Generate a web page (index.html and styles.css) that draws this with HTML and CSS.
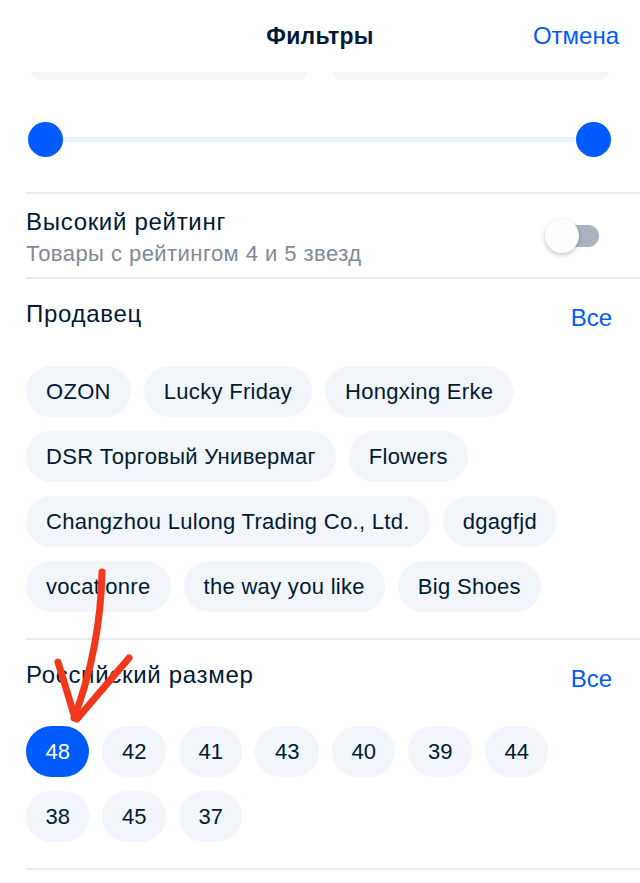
FILE: index.html
```html
<!DOCTYPE html>
<html lang="ru">
<head>
    <meta charset="UTF-8">
    <meta name="viewport" content="width=device-width, initial-scale=1.0">
    <title>Фильтры</title>
    <link rel="stylesheet" href="styles.css">
</head>
<body>
    <div class="screen">
        <div class="header">
            <div></div>
            <div class="header-title">Фильтры</div>
            <a class="header-cancel" href="#">Отмена</a>
        </div>

        <!-- price inputs, scrolled under the header -->
        <div class="price-inputs">
            <div class="price-input"></div>
            <div class="price-input"></div>
        </div>

        <div class="section slider-section">
            <div class="range">
                <div class="range-thumb"></div>
                <div class="range-track"></div>
                <div class="range-thumb"></div>
            </div>
        </div>

        <div class="section rating-section">
            <div class="rating-text">
                <div class="section-title">Высокий рейтинг</div>
                <div class="section-sub">Товары с рейтингом 4 и 5 звезд</div>
            </div>
            <div class="toggle">
                <div class="toggle-knob"></div>
            </div>
        </div>

        <div class="section">
            <div class="section-head">
                <div class="section-title">Продавец</div>
                <a class="section-all" href="#">Все</a>
            </div>
            <div class="chips">
                <span class="chip">OZON</span>
                <span class="chip">Lucky Friday</span>
                <span class="chip">Hongxing Erke</span>
                <span class="chip">DSR Торговый Универмаг</span>
                <span class="chip">Flowers</span>
                <span class="chip">Changzhou Lulong Trading Co., Ltd.</span>
                <span class="chip">dgagfjd</span>
                <span class="chip">vocationre</span>
                <span class="chip">the way you like</span>
                <span class="chip">Big Shoes</span>
            </div>
        </div>

        <div class="section">
            <div class="section-head">
                <div class="section-title">Российский размер</div>
                <a class="section-all" href="#">Все</a>
            </div>
            <div class="chips sizes">
                <span class="chip chip-active">48</span>
                <span class="chip">42</span>
                <span class="chip">41</span>
                <span class="chip">43</span>
                <span class="chip">40</span>
                <span class="chip">39</span>
                <span class="chip">44</span>
                <span class="chip">38</span>
                <span class="chip">45</span>
                <span class="chip">37</span>
            </div>
        </div>

        <!-- hand drawn annotation -->
        <svg class="annotation" width="640" height="883" viewBox="0 0 640 883">
            <path d="M102 572 C 101 620, 93 668, 74 718" />
            <path d="M58 662 L 75 718" />
            <path d="M129 658 L 77 719" />
        </svg>
    </div>
</body>
</html>
```

FILE: styles.css
```css
* {
    margin: 0;
    padding: 0;
    box-sizing: border-box;
}

body {
    font-family: 'Liberation Sans', Arial, sans-serif;
    color: #001a34;
    background: white;
}

a {
    text-decoration: none;
}

.screen {
    position: relative;
    width: 640px;
    height: 883px;
    overflow: hidden;
}

.header {
    height: 72px;
    display: grid;
    grid-template-columns: 1fr auto 1fr;
    align-items: center;
    padding: 0 21px;
}

.header-title {
    font-size: 23px;
    font-weight: bold;
    letter-spacing: 0.3px;
}

.header-cancel {
    justify-self: end;
    font-size: 24px;
    color: #005bff;
}

.price-inputs {
    height: 8px;
    overflow: hidden;
    display: flex;
    align-items: flex-end;
    gap: 22px;
    padding: 0 30px;
}

.price-input {
    flex: 1;
    height: 50px;
    flex-shrink: 0;
    background: #f4f6fa;
    border-radius: 12px;
}

.section {
    margin-left: 26px;
    padding-right: 28px;
    border-bottom: 2px solid #e8ebf0;
}

.slider-section {
    padding: 42px 29px 35px 2px;
}

.range {
    display: flex;
    align-items: center;
}

.range-thumb {
    width: 35px;
    height: 35px;
    border-radius: 50%;
    background: #005bff;
    flex-shrink: 0;
}

.range-track {
    flex: 1;
    height: 5px;
    background: #e9f1fc;
}

.rating-section {
    display: flex;
    align-items: center;
    padding-top: 13px;
    padding-bottom: 10px;
}

.rating-text {
    flex: 1;
}

.section-title {
    font-size: 24px;
    line-height: 30px;
    letter-spacing: 0.7px;
}

.section-sub {
    font-size: 22px;
    line-height: 30px;
    margin-top: 2px;
    margin-bottom: -2px;
    color: #7f8a99;
    letter-spacing: 0.45px;
}

.toggle {
    position: relative;
    width: 52px;
    height: 22px;
    margin-right: 13px;
    margin-top: -2px;
    border-radius: 11px;
    background: #aab3bf;
}

.toggle-knob {
    position: absolute;
    left: -2px;
    top: -6px;
    width: 34px;
    height: 34px;
    border-radius: 50%;
    background: #fdfdfd;
    box-shadow: 0 2px 5px rgba(0, 26, 52, 0.25);
}

.section-head {
    height: 50px;
    display: flex;
    justify-content: space-between;
    align-items: flex-start;
    padding-top: 20px;
}

.section-all {
    font-size: 24px;
    line-height: 30px;
    color: #005bff;
    margin-top: 4px;
}

.chips {
    display: flex;
    flex-wrap: wrap;
    gap: 14px 13px;
    padding: 37px 0 26px;
}

.chips.sizes {
    padding-top: 36px;
}

.chip {
    height: 51px;
    padding: 0 20px;
    display: flex;
    align-items: center;
    border-radius: 26px;
    background: #f2f5f9;
    font-size: 22px;
    letter-spacing: 0.3px;
    white-space: nowrap;
}

.sizes .chip {
    padding: 0 19.5px;
    letter-spacing: 0;
}

.chip-active {
    background: #005bff;
    color: white;
}

.annotation {
    position: absolute;
    left: 0;
    top: 0;
    pointer-events: none;
}

.annotation path {
    fill: none;
    stroke: #f2381c;
    stroke-width: 7;
    stroke-linecap: round;
    stroke-linejoin: round;
}
```
